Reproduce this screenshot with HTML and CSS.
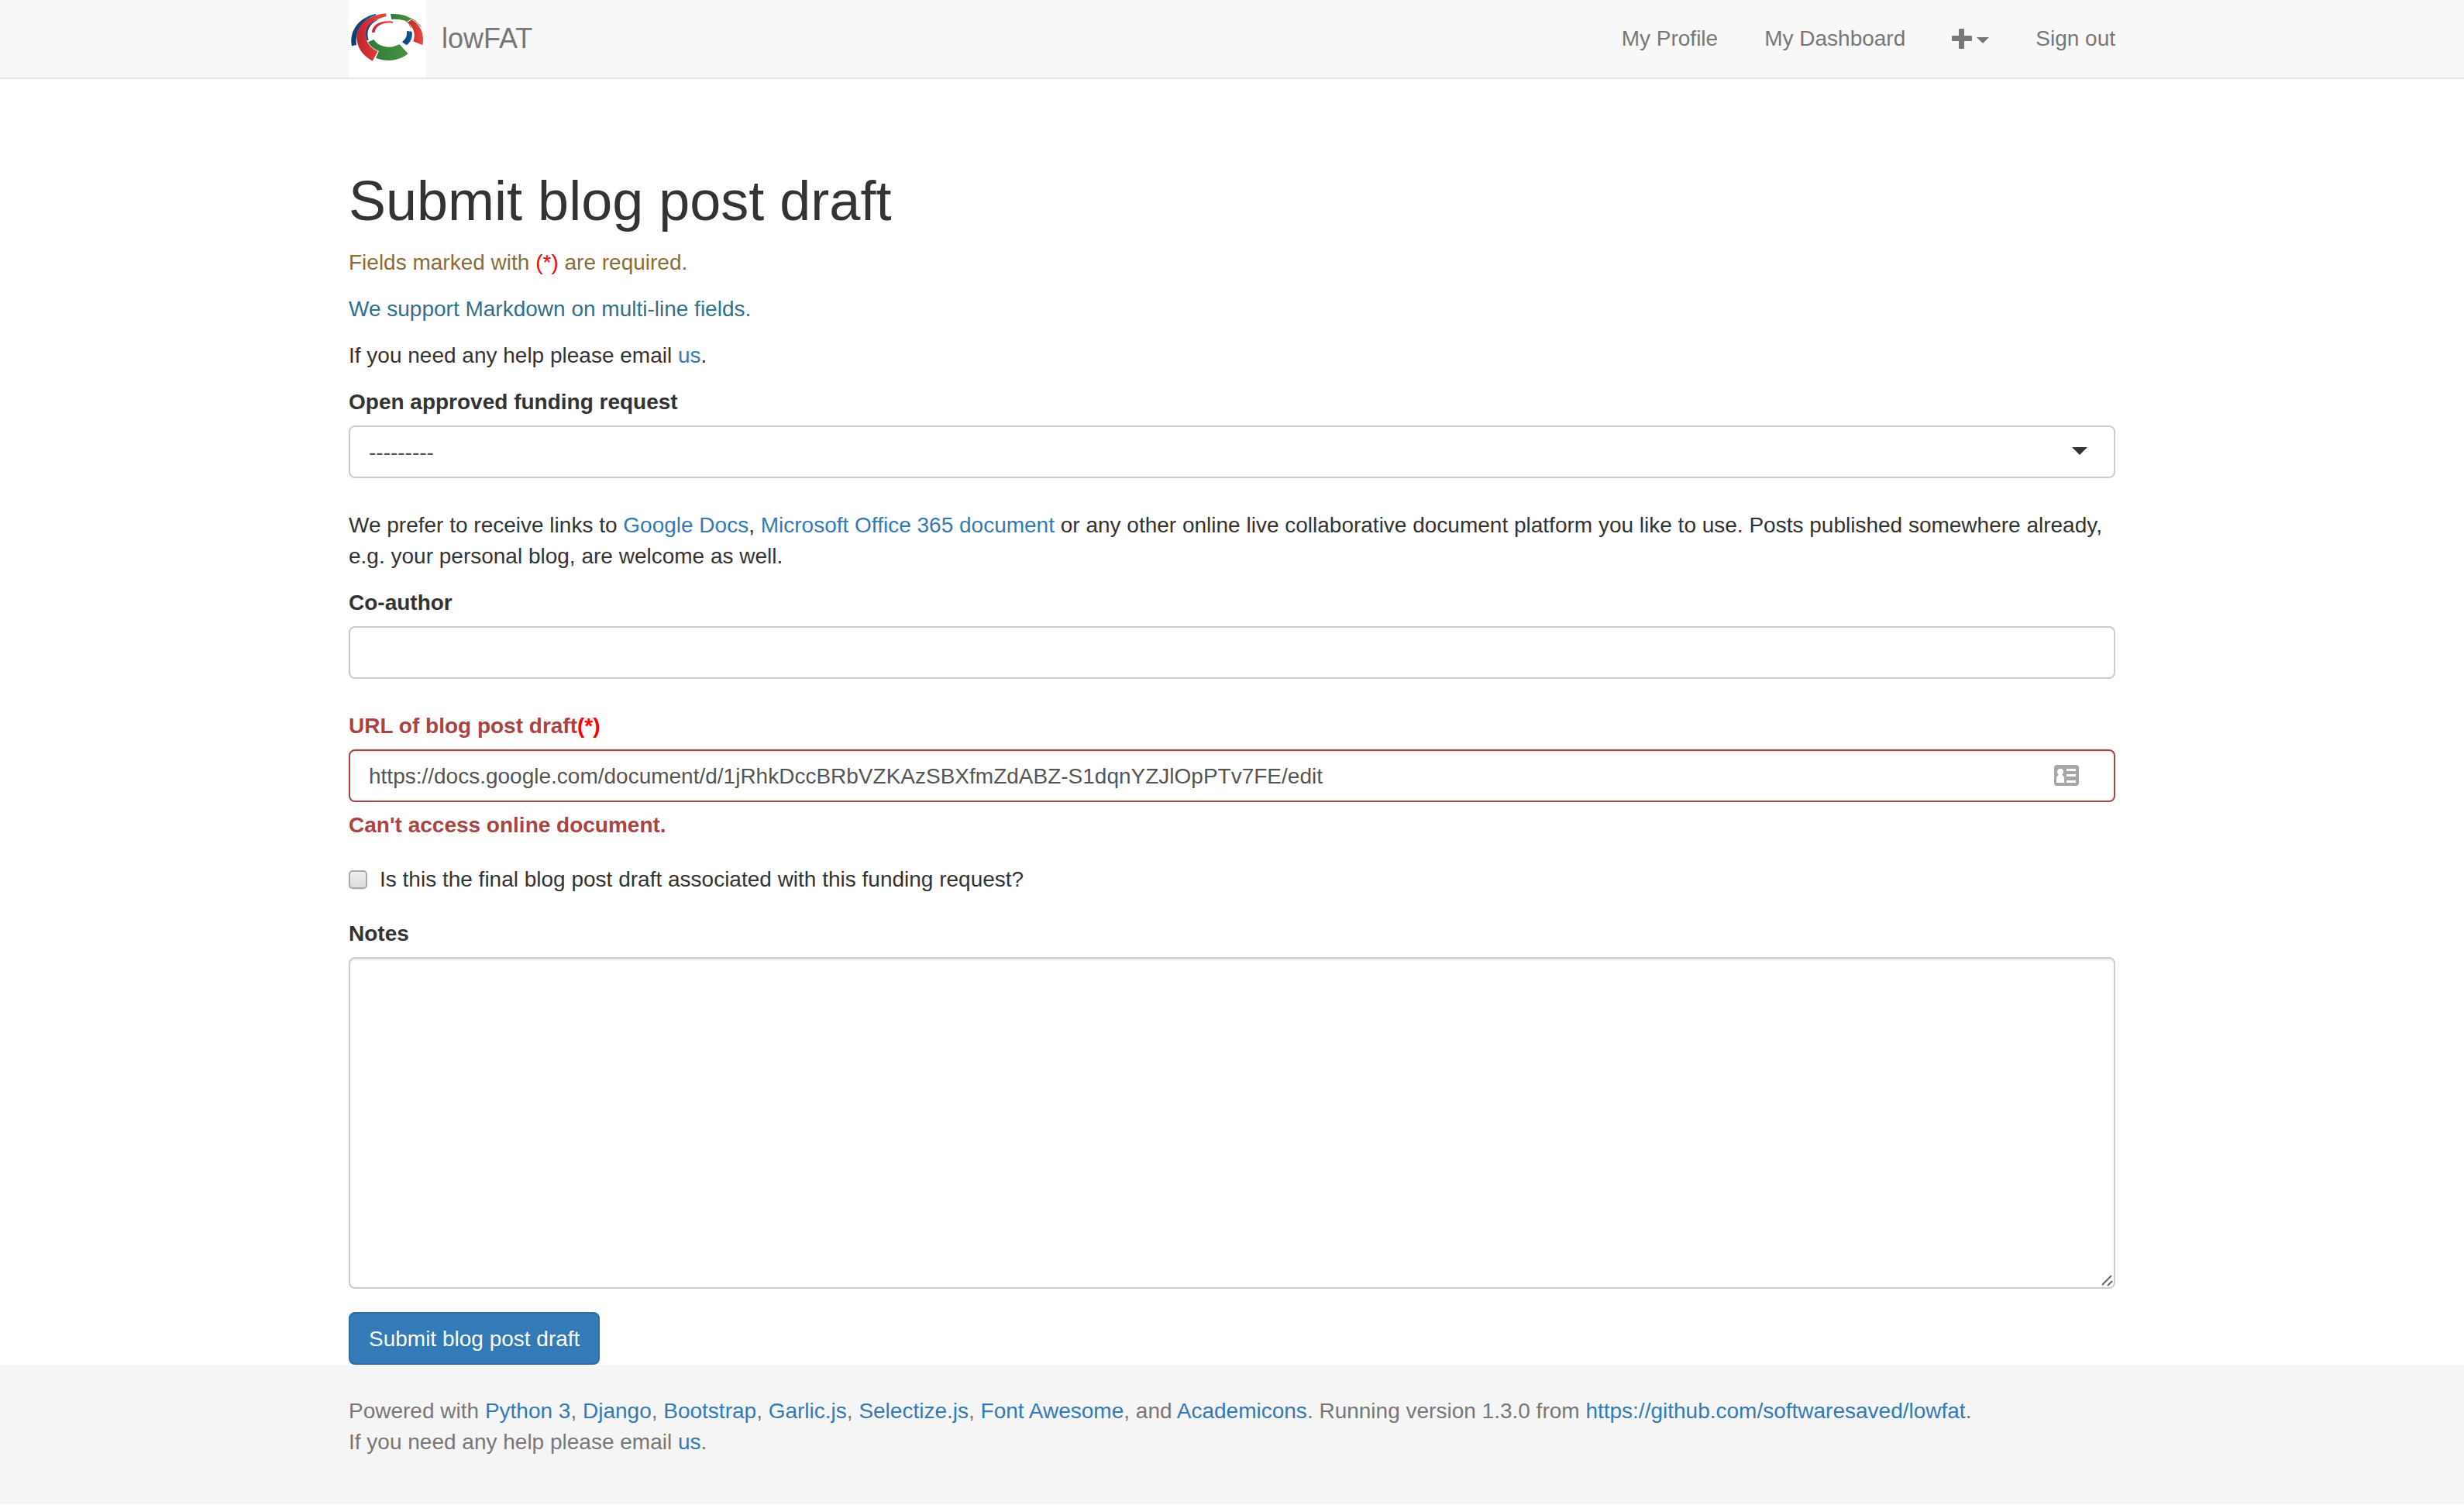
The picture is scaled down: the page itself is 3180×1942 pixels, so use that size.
FILE: index.html
```html
<!DOCTYPE html>
<html lang="en">
<head>
<meta charset="utf-8">
<meta name="viewport" content="width=device-width, initial-scale=1">
<title>lowFAT - Submit blog post draft</title>
<link rel="stylesheet" href="styles.css">
</head>
<body>
<header class="navbar">
  <div class="container navbar-inner">
    <a class="brand" href="#">
      <svg class="brand-logo" viewBox="60 0 300 300" aria-hidden="true">
        <defs>
          <linearGradient id="red"><stop offset="0" stop-color="#bd2330"/><stop offset="1" stop-color="#f04a41"/></linearGradient>
          <linearGradient id="green"><stop offset="0" stop-color="#2c7a3c"/><stop offset="1" stop-color="#4c9140"/></linearGradient>
          <linearGradient id="blue"><stop offset="0" stop-color="#0b3c6e"/><stop offset="1" stop-color="#0a5da0"/></linearGradient>
        </defs>
        <path fill="url(#blue)" d="M72 178C61 121 98 68 165 54L166 59C112 75 84 122 90 174Z"/>
        <path fill="url(#red)" d="M204 52C132 59 91 99 91 145C91 184 116 217 152 236L173 199C144 185 127 164 127 137C127 102 157 74 206 64Z"/>
        <path fill="url(#blue)" d="M131 157C117 116 137 84 181 74C145 88 125 114 137 155Z"/>
        <path fill="url(#red)" d="M150 126C150 95 186 76 232 83L230 90C196 84 164 99 161 125Z"/>
        <path fill="url(#green)" d="M222 54C255 52 283 59 305 73L286 84C268 76 249 73 226 75Z"/>
        <path fill="none" stroke="#4c9140" stroke-width="3" d="M304 72Q326 84 341 104M283 83Q296 93 302 108"/>
        <path fill="url(#red)" d="M304 76C339 96 355 135 346 175L310 160C320 132 313 107 288 87Z"/>
        <path fill="url(#blue)" d="M285 120L305 122C308 145 301 161 284 175L267 163C281 151 287 140 285 120Z"/>
        <path fill="url(#green)" d="M157 153L135 163C144 180 160 192 177 198L165 224C207 241 257 236 290 208L256 171C225 190 178 185 157 153Z"/>
      </svg>
      <span>lowFAT</span>
    </a>
    <nav class="nav">
      <a href="#">My Profile</a>
      <a href="#">My Dashboard</a>
      <a href="#" class="nav-add" aria-label="Add">
        <svg class="icon-plus" viewBox="1 0 26 28" aria-hidden="true"><path d="M11 1h5q1 0 1 1v8h9q1 0 1 1v5q0 1-1 1h-9v9q0 1-1 1h-5q-1 0-1-1v-9H2q-1 0-1-1v-5q0-1 1-1h8V2q0-1 1-1z"/></svg>
        <svg class="icon-caret" viewBox="0 0 16 8" aria-hidden="true"><path d="M0 0h16L8 8z"/></svg>
      </a>
      <a href="#">Sign out</a>
    </nav>
  </div>
</header>

<main class="container content">
  <h1>Submit blog post draft</h1>
  <p class="text-warning">Fields marked with <span class="required">(*)</span> are required.</p>
  <p class="text-info">We support Markdown on multi-line fields.</p>
  <p>If you need any help please email <a href="#">us</a>.</p>

  <form class="form">
    <div class="form-group">
      <label for="fund">Open approved funding request</label>
      <div class="control-wrap">
        <select id="fund" class="form-control form-select"><option>---------</option></select>
        <svg class="select-caret" viewBox="0 0 20 10" aria-hidden="true"><path d="M0 0h20L10 10z"/></svg>
      </div>
    </div>

    <p>We prefer to receive links to <a href="#">Google Docs</a>, <a href="#">Microsoft Office 365 document</a> or any other online live collaborative document platform you like to use. Posts published somewhere already, e.g. your personal blog, are welcome as well.</p>

    <div class="form-group">
      <label for="coauthor">Co-author</label>
      <input id="coauthor" class="form-control" type="text">
    </div>

    <div class="form-group has-error">
      <label for="url">URL of blog post draft<span class="required">(*)</span></label>
      <div class="control-wrap">
        <input id="url" class="form-control shaded" type="text" value="https://docs.google.com/document/d/1jRhkDccBRbVZKAzSBXfmZdABZ-S1dqnYZJlOpPTv7FE/edit">
        <svg class="card-icon" viewBox="0 0 32 28" aria-hidden="true">
          <rect width="32" height="27" rx="4" fill="#a6a6a6"/>
          <path fill="#fff" d="M8 5a4 4 0 0 1 4 4q0 2-2 4q3 1 3 5v5H3v-5q0-4 3-5q-2-2-2-4a4 4 0 0 1 4-4zM16 5h12v3H16zM16 12h12v3H16zM16 20h12v3H16z"/>
        </svg>
      </div>
      <strong class="help-block">Can't access online document.</strong>
    </div>

    <div class="checkbox">
      <input id="final" type="checkbox">
      <label for="final">Is this the final blog post draft associated with this funding request?</label>
    </div>

    <div class="form-group">
      <label for="notes">Notes</label>
      <div class="control-wrap">
        <textarea id="notes" class="form-control shaded" rows="10"></textarea>
        <svg class="grip" viewBox="0 0 16 16" aria-hidden="true"><path d="M2 14L14 2M9 15L15 9"/></svg>
      </div>
    </div>

    <button class="btn" type="submit">Submit blog post draft</button>
  </form>
</main>

<footer class="footer">
  <div class="container">
    Powered with <a href="#">Python 3</a>, <a href="#">Django</a>, <a href="#">Bootstrap</a>, <a href="#">Garlic.js</a>, <a href="#">Selectize.js</a>, <a href="#">Font Awesome</a>, and <a href="#">Academicons</a>. Running version 1.3.0 from <a href="#">https://github.com/softwaresaved/lowfat</a>.<br>
    If you need any help please email <a href="#">us</a>.
  </div>
</footer>
</body>
</html>
```
FILE: styles.css
```css
*, *::before, *::after { box-sizing: border-box; }

body {
  margin: 0;
  background: #fff;
  color: #333;
  font: 28px/40px "Liberation Sans", Arial, sans-serif;
}

a { color: #337ab7; text-decoration: none; }
p { margin: 0 0 20px; }

.container {
  max-width: 2340px;
  margin: 0 auto;
  padding: 0 30px;
}

/* Top bar */
.navbar {
  background: #f8f8f8;
  border-bottom: 2px solid #e7e7e7;
}
.navbar-inner {
  display: flex;
  justify-content: space-between;
}
.brand {
  display: flex;
  align-items: center;
  gap: 20px;
  color: #777;
  font-size: 36px;
}
.brand-logo {
  width: 100px;
  height: 100px;
  background: #fff;
}
.nav {
  display: flex;
  align-items: center;
  gap: 60px;
}
.nav a { color: #777; }
.nav-add {
  display: flex;
  align-items: center;
  gap: 6px;
}
.icon-plus { width: 26px; height: 28px; fill: #777; }
.icon-caret { width: 16px; height: 8px; margin-top: 4px; fill: #777; }

/* Page text */
.content { padding-top: 117px; }
h1 {
  margin: 0 0 20px;
  font-size: 72px;
  font-weight: 400;
  line-height: 80px;
}
.text-warning { color: #8a6d3b; }
.text-info { color: #31708f; }
.required { color: #f00; }

/* Form */
.form-group { margin-bottom: 41px; }
.form-group label {
  display: block;
  margin-bottom: 10px;
  font-weight: 700;
}
.control-wrap { position: relative; }
.form-control {
  display: block;
  width: 100%;
  height: 68px;
  margin: 0;
  padding: 13px 24px 11px;
  border: 2px solid #ccc;
  border-radius: 8px;
  background: #fff;
  color: #555;
  font: inherit;
}
.form-select { appearance: none; }
.shaded { box-shadow: inset 0 2px 2px rgba(0, 0, 0, .075); }
textarea.form-control { height: 428px; resize: none; }

.select-caret {
  position: absolute;
  top: 28px;
  right: 36px;
  width: 20px;
  height: 10px;
  fill: #333;
  pointer-events: none;
}
.card-icon {
  position: absolute;
  top: 20px;
  right: 47px;
  width: 32px;
  height: 28px;
}
.grip {
  position: absolute;
  right: 3px;
  bottom: 3px;
  width: 16px;
  height: 16px;
  fill: none;
  stroke: #666;
  stroke-width: 2;
  pointer-events: none;
}

.has-error { margin-bottom: 30px; color: #a94442; }
.has-error .form-control { border-color: #a94442; }
.help-block { display: block; margin-top: 10px; }

.checkbox {
  display: flex;
  align-items: center;
  gap: 16px;
  margin-bottom: 30px;
}
.checkbox input {
  appearance: none;
  width: 24px;
  height: 24px;
  margin: 0;
  border: 2px solid #a9a9a9;
  border-radius: 5px;
  background: linear-gradient(#efefef, #dcdcdc);
  box-shadow: 0 1px 1px rgba(0, 0, 0, .1);
}

.form-group:last-of-type { margin-bottom: 30px; }

.btn {
  display: block;
  padding: 13px 24px 11px;
  border: 2px solid #2e6da4;
  border-radius: 8px;
  background: #337ab7;
  color: #fff;
  font: inherit;
}

/* Footer */
.footer {
  padding: 40px 0 60px;
  background: #f5f5f5;
  color: #777;
}
```
